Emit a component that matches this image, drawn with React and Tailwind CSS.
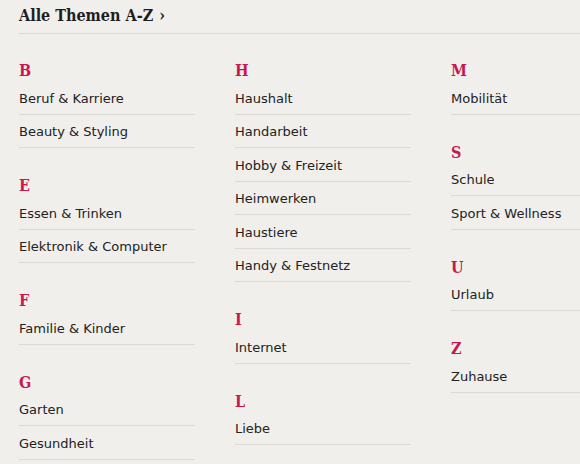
import React from "react";

const columns = [
    [
        { letter: "B", items: ["Beruf & Karriere", "Beauty & Styling"] },
        { letter: "E", items: ["Essen & Trinken", "Elektronik & Computer"] },
        { letter: "F", items: ["Familie & Kinder"] },
        { letter: "G", items: ["Garten", "Gesundheit"] },
    ],
    [
        { letter: "H", items: ["Haushalt", "Handarbeit", "Hobby & Freizeit", "Heimwerken", "Haustiere", "Handy & Festnetz"] },
        { letter: "I", items: ["Internet"] },
        { letter: "L", items: ["Liebe"] },
    ],
    [
        { letter: "M", items: ["Mobilität"] },
        { letter: "S", items: ["Schule", "Sport & Wellness"] },
        { letter: "U", items: ["Urlaub"] },
        { letter: "Z", items: ["Zuhause"] },
    ],
];

const Group = ({ letter, items, first }) => (
    <div className={first ? "" : "mt-[27px]"}>
        <h3 className="h-[21px] text-[16px] leading-[21px] font-bold text-[#c8174f] [font-family:'DejaVu_Serif_Condensed','DejaVu_Serif',serif] [font-stretch:condensed]">
            {letter}
        </h3>
        <ul>
            {items.map((item) => (
                <li
                    key={item}
                    className="h-[33.5px] pt-[2px] flex items-center border-b border-[#dddad4] text-[13px] text-[#222] [font-family:'DejaVu_Sans',sans-serif]"
                >
                    {item}
                </li>
            ))}
        </ul>
    </div>
);

const App = () => {
    return (
        <div className="w-[580px] h-[464px] overflow-hidden bg-[#f1efeb] pl-[19px]">
            <div className="h-[34px] flex items-center border-b border-[#dddad4]">
                <h2 className="text-[16px] font-bold text-[#1e1e1e] [font-family:'DejaVu_Serif_Condensed','DejaVu_Serif',serif] [font-stretch:condensed] pb-[2px]">
                    Alle Themen A-Z <span className="ml-[1px]">›</span>
                </h2>
            </div>
            <div className="grid grid-cols-[176px_176px_200px] gap-x-[40px] pt-[26px]">
                {columns.map((groups, i) => (
                    <div key={i}>
                        {groups.map((g, j) => (
                            <Group key={g.letter} {...g} first={j === 0} />
                        ))}
                    </div>
                ))}
            </div>
        </div>
    );
};

export default App;
